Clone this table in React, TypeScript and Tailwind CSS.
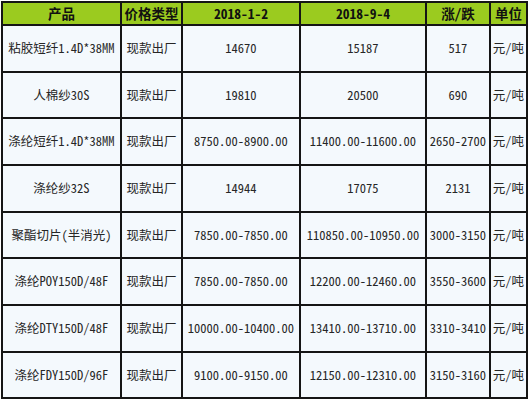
const rows = [
  ["粘胶短纤1.4D*38MM", "现款出厂", "14670", "15187", "517", "元/吨"],
  ["人棉纱30S", "现款出厂", "19810", "20500", "690", "元/吨"],
  ["涤纶短纤1.4D*38MM", "现款出厂", "8750.00-8900.00", "11400.00-11600.00", "2650-2700", "元/吨"],
  ["涤纶纱32S", "现款出厂", "14944", "17075", "2131", "元/吨"],
  ["聚酯切片(半消光)", "现款出厂", "7850.00-7850.00", "110850.00-10950.00", "3000-3150", "元/吨"],
  ["涤纶POY150D/48F", "现款出厂", "7850.00-7850.00", "12200.00-12460.00", "3550-3600", "元/吨"],
  ["涤纶DTY150D/48F", "现款出厂", "10000.00-10400.00", "13410.00-13710.00", "3310-3410", "元/吨"],
  ["涤纶FDY150D/96F", "现款出厂", "9100.00-9150.00", "12150.00-12310.00", "3150-3160", "元/吨"],
]

const headers = ["产品", "价格类型", "2018-1-2", "2018-9-4", "涨/跌", "单位"]

const font = { fontFamily: '"Noto Sans Mono CJK SC", "Noto Sans CJK SC", "Liberation Mono", monospace' }

export default function App() {
  return (
    <div className="bg-white w-[529px] h-[400px] pt-[1px] pl-[1px]" style={font}>
      <div className="grid grid-cols-[117px_59px_116px_124px_62px_35px] grid-rows-[21px_45px_44px_45px_45px_44px_45px_45px_44px] gap-[2px] p-[2px] bg-[#151515] w-[527px]">
        {headers.map((h) => (
          <div key={h} className="bg-[#9bcb1f] flex items-center justify-center text-[13.5px] font-bold text-[#111] whitespace-nowrap overflow-hidden">
            {h}
          </div>
        ))}
        {rows.map((row, i) =>
          row.map((cell, j) => (
            <div
              key={`${i}-${j}`}
              className="bg-[#f4f9fd] flex items-center justify-center text-[12.5px] text-[#262626] whitespace-nowrap overflow-hidden"
            >
              {cell}
            </div>
          ))
        )}
      </div>
    </div>
  )
}
